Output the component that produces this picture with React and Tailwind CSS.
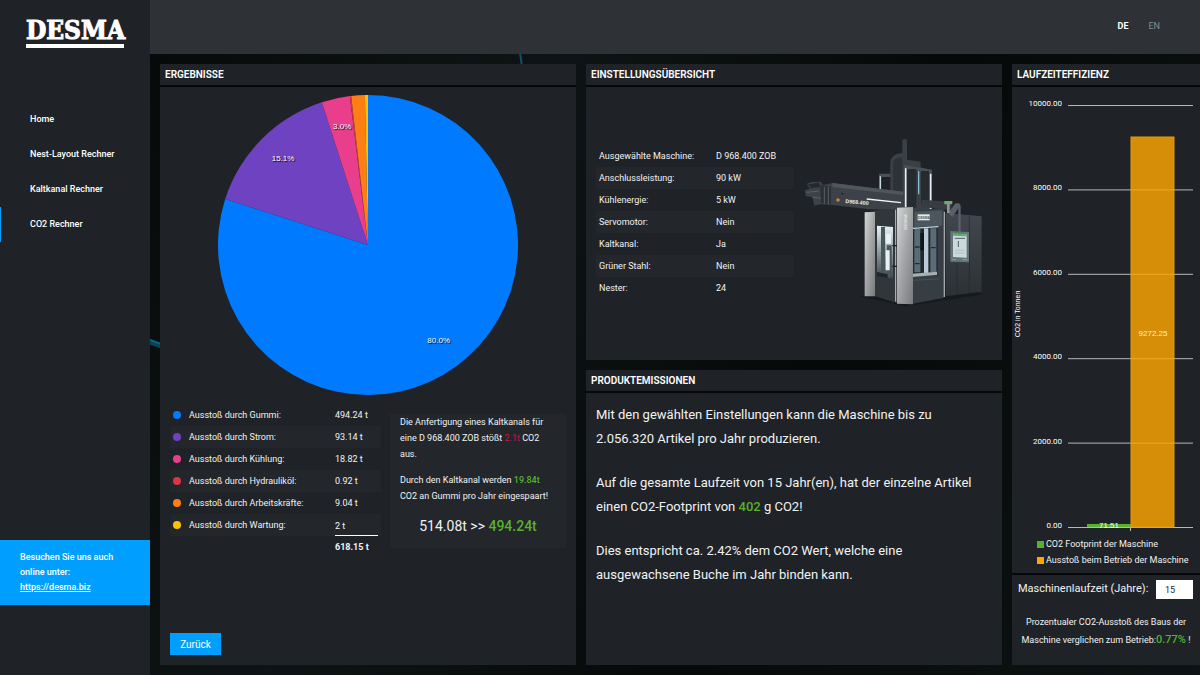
import React, { useState } from "react";

const emissions = [
    { label: "Gummi", value: 494.24, fill: "#007bff", dot: "bg-[#007bff]" },
    { label: "Strom", value: 93.14, fill: "#6f42c1", dot: "bg-[#6f42c1]" },
    { label: "Kühlung", value: 18.82, fill: "#e83e8c", dot: "bg-[#e83e8c]" },
    { label: "Hydrauliköl", value: 0.92, fill: "#dc3545", dot: "bg-[#dc3545]" },
    { label: "Arbeitskräfte", value: 9.04, fill: "#fd7e14", dot: "bg-[#fd7e14]" },
    { label: "Wartung", value: 2, fill: "#ffc107", dot: "bg-[#ffc107]" },
];

const settings = [
    ["Ausgewählte Maschine:", "D 968.400 ZOB"],
    ["Anschlussleistung:", "90 kW"],
    ["Kühlenergie:", "5 kW"],
    ["Servomotor:", "Nein"],
    ["Kaltkanal:", "Ja"],
    ["Grüner Stahl:", "Nein"],
    ["Nester:", "24"],
];

const navItems = ["Home", "Nest-Layout Rechner", "Kaltkanal Rechner", "CO2 Rechner"];

const Panel = ({ title, className = "", children }) => (
    <section className={`flex flex-col bg-[#1f2327] ${className}`}>
        <h2 className="h-[23px] shrink-0 border-b-2 border-[#050708] px-[5px] text-[10px] leading-[22px] font-semibold uppercase text-white">
            {title}
        </h2>
        {children}
    </section>
);

const Sidebar = () => (
    <aside className="flex w-[150px] shrink-0 flex-col bg-[#1f2327]">
        <a href="#home" className="mx-[26px] mt-[16px] border-b-4 border-white font-['DejaVu_Serif_Condensed','DejaVu_Serif',serif] text-[26px] leading-[28px] font-bold text-white [-webkit-text-stroke:1px_#fff]">
            DESMA
        </a>
        <nav className="mt-[54px] flex flex-col">
            {navItems.map((item) => (
                <a
                    key={item}
                    href="#"
                    className={`h-[35px] pl-[29px] text-[9px] leading-[35px] font-medium text-white border-l ${item === "CO2 Rechner" ? "border-[#009fff]" : "border-transparent"}`}
                >
                    {item}
                </a>
            ))}
        </nav>
        <div className="mt-auto mb-[70px] bg-[#009fff] px-5 pt-[10px] pb-[10px] text-[9px] leading-[15px] font-medium text-white">
            Besuchen Sie uns auch online unter:
            <a href="https://desma.biz" className="block underline">https://desma.biz</a>
        </div>
    </aside>
);

const PieChart = () => {
    const total = emissions.reduce((sum, e) => sum + e.value, 0);
    const point = (share, r) => {
        const a = share * 2 * Math.PI;
        return [150 + r * Math.sin(a), 150 - r * Math.cos(a)];
    };
    let start = 0;

    return (
        <svg viewBox="0 0 300 300" className="mx-auto mt-2 w-[300px]" role="img" aria-label="Ausstoß nach Quelle">
            {emissions.map((e) => {
                const share = e.value / total;
                const [x1, y1] = point(start, 150);
                const [x2, y2] = point(start + share, 150);
                const [tx, ty] = point(start + share / 2, 120);
                start += share;
                return (
                    <g key={e.label}>
                        <path d={`M150 150L${x1} ${y1}A150 150 0 ${share > 0.5 ? 1 : 0} 1 ${x2} ${y2}Z`} fill={e.fill} />
                        {share > 0.02 && (
                            <text x={tx} y={ty + 1} textAnchor="middle" className="fill-white font-['Liberation_Sans',sans-serif] text-[8px] [text-shadow:1px_1px_1px_#000]">
                                {(share * 100).toFixed(1)}%
                            </text>
                        )}
                    </g>
                );
            })}
        </svg>
    );
};

const Results = () => (
    <Panel title="Ergebnisse">
        <PieChart />
        <div className="mx-[10px] mt-[9px] flex items-start gap-[9px] text-[9px]">
            <table className="w-[211px] shrink-0">
                <tbody>
                    {emissions.map((e, i) => (
                        <tr key={e.label} className="h-[22px] even:bg-[#23272b]">
                            <td className="w-[19px] pl-[3px]">
                                <span className={`block size-2 rounded-full ${e.dot}`} />
                            </td>
                            <td className="pt-px">Ausstoß durch {e.label}:</td>
                            <td className="w-[46px] pr-[3px]">
                                <div className={i === emissions.length - 1 ? "border-b border-white leading-[17px] mt-1" : "leading-[17px]"}>
                                    {e.value} t
                                </div>
                            </td>
                        </tr>
                    ))}
                    <tr className="h-[22px] font-bold">
                        <td colSpan={2} />
                        <td className="pt-px">618.15 t</td>
                    </tr>
                </tbody>
            </table>
            <div className="mt-[10px] min-w-0 flex-1 bg-[#23272b] px-[10px] pb-[10px] leading-4">
                <p>
                    Die Anfertigung eines Kaltkanals für eine D 968.400 ZOB stößt <span className="text-[#c8174a]">2.1t</span> CO2 aus.
                </p>
                <p className="mt-[10px]">
                    Durch den Kaltkanal werden <span className="font-medium text-[#58b12c]">19.84t</span> CO2 an Gummi pro Jahr eingespaart!
                </p>
                <p className="mt-[10px] text-center text-[14px] leading-[24px]">
                    514.08t &gt;&gt; <span className="font-medium text-[#58b12c]">494.24t</span>
                </p>
            </div>
        </div>
        <button type="button" className="mt-auto mb-[10px] ml-[10px] h-[22px] w-[51px] bg-[#009fff] text-[10px] text-white">
            Zurück
        </button>
    </Panel>
);

const Machine = () => (
    <svg viewBox="30 20 534 510" className="w-[178px] shrink-0" role="img" aria-label="D 968.400 ZOB">
        <defs>
            <linearGradient id="steel" x1="0" y1="0" x2="1" y2="1">
                <stop offset="0" stopColor="#d4d5d6" />
                <stop offset="0.5" stopColor="#a2a4a6" />
                <stop offset="1" stopColor="#77797b" />
            </linearGradient>
            <linearGradient id="body" x1="0" y1="0" x2="0" y2="1">
                <stop offset="0" stopColor="#41474c" />
                <stop offset="1" stopColor="#2c3135" />
            </linearGradient>
            <linearGradient id="glow" x1="0" y1="0" x2="0" y2="1">
                <stop offset="0" stopColor="#e8f3f7" />
                <stop offset="0.5" stopColor="#8b9aa2" />
                <stop offset="1" stopColor="#3a444a" />
            </linearGradient>
        </defs>
        <path d="M195 498L330 528L565 492L530 480Z" fill="#171a1d" />
        {/* tower */}
        <path d="M286 200V92Q292 70 322 68V30Q330 22 336 30V88L377 94V110L411 122V240H286Z" fill="#3a4045" />
        <path d="M294 190V96Q300 80 322 82V190Z" fill="#2d3236" />
        <path d="M252 130H286V140H259V184H252ZM326 104L411 118V130L326 116Z" fill="#4a5156" />
        <path d="M336 116H364V232H336ZM378 122H402V222H378Z" fill="#262b2f" />
        <path d="M256 138V181" stroke="#c9dce4" strokeWidth="4" />
        <path d="M332 114V230M407 130V240" stroke="#e3effa" strokeWidth="5" />
        <path d="M371 123V192" stroke="#86bccb" strokeWidth="4" />
        {/* injection unit */}
        <path d="M30 180L44 176L36 160L48 155L78 154L84 164L112 158L325 184V240L222 237L112 224L76 222L58 226L52 200L32 198Z" fill="#3c4247" />
        <path d="M112 158L325 184V194L112 170Z" fill="#50575c" />
        <path d="M76 165L108 170V222L78 218Z" fill="#2b3034" />
        <path d="M40 162L72 157L76 170L48 174Z" fill="#252a2e" />
        <path d="M34 186L72 182M52 200L78 204M88 170V220M100 170V222" stroke="#596167" strokeWidth="3" />
        <circle cx="129" cy="209" r="5" fill="#db8347" />
        <circle cx="142" cy="190" r="3" fill="#202428" />
        <path d="M215 206L318 217" stroke="#f3f6f8" strokeWidth="4" />
        <text x="151" y="218" transform="rotate(5 151 218)" fill="#e9edf0" fontSize="16" fontWeight="700" className="font-['Liberation_Sans',sans-serif]">D968.400</text>
        <path d="M380 208L470 214V240L380 230Z" fill="#363c41" />
        {/* cabinet */}
        <path d="M240 240L306 236V518L240 498Z" fill="#30363a" />
        <path d="M246 286L294 290V446L246 438Z" fill="url(#glow)" />
        <path d="M258 290H270V440H258ZM276 345H290V440H276Z" fill="#4b555c" />
        <path d="M272 310H288V340H272ZM272 360H284V420H272Z" fill="#e8f0f3" />
        <path d="M246 425L278 432V443L246 438Z" fill="#20262a" />
        <path d="M302 238V514" stroke="#bdc3c8" strokeWidth="3" />
        <path d="M209 246L240 244V498L209 498Z" fill="url(#steel)" />
        <path d="M354 238L448 234V502L354 520Z" fill="#363d43" />
        <path d="M358 244L442 240V286L358 290Z" fill="#4b565e" />
        <rect x="368" y="252" width="36" height="18" fill="#dfeaf0" />
        <text x="369" y="265" fill="#4b565e" fontSize="10" fontWeight="700" className="font-['Liberation_Sans',sans-serif]">DESMA</text>
        <path d="M354 292L428 288V436L354 438Z" fill="#202930" />
        <path d="M358 296H376V426H358ZM406 294H424V426H406Z" fill="#5c6c77" />
        <path d="M387 294H400V428H387Z" fill="#b9cbd6" />
        <path d="M376 308H387V360H376Z" fill="#0f1519" />
        <path d="M354 294L430 289" stroke="#c6dae4" strokeWidth="4" />
        <path d="M350 430L426 424V434L350 440Z" fill="#a6b0b4" />
        <path d="M360 350H374M408 352H422M360 400H374" stroke="#252d33" strokeWidth="4" />
        <path d="M354 450L430 446" stroke="#535c63" strokeWidth="2" />
        <path d="M306 232L354 230V522L306 520Z" fill="url(#steel)" />
        <text x="336" y="298" transform="rotate(-90 336 298)" fill="#e1e2e3" fontSize="13" fontWeight="700" className="font-['Liberation_Sans',sans-serif]">DESMA</text>
        <path d="M292 346H306M292 408H306" stroke="#171b1e" strokeWidth="4" />
        {/* control cabinet */}
        <path d="M452 248L560 258V484L452 498Z" fill="url(#body)" />
        <path d="M448 244V500" stroke="#a2a8ad" strokeWidth="4" />
        <path d="M486 400V492M523 258V488" stroke="#25292d" strokeWidth="2" />
        <path d="M460 248L480 220Q494 214 497 226V304H490V234L472 260Z" fill="#59626a" />
        <path d="M448 212H472V222H464V248H456V222H448Z" fill="#8b9790" />
        <rect x="450" y="213" width="10" height="8" fill="#45c750" />
        <path d="M466 302L522 305V396L466 394Z" fill="#66757c" />
        <path d="M474 310L515 312V382L474 380Z" fill="#cad9da" />
        <path d="M474 310L515 312V318L474 316Z" fill="#53b55d" />
        <path d="M479 324H510M490 332V350" stroke="#536168" strokeWidth="3" />
        <path d="M480 360H508M480 368H508" stroke="#a3b3b6" strokeWidth="2" />
        <path d="M472 388H482M502 388H516" stroke="#55c962" strokeWidth="3" />
    </svg>
);

const SettingsOverview = () => (
    <Panel title="Einstellungsübersicht" className="flex-1">
        <div className="flex flex-1 items-center gap-[11px] pb-[2px] pl-[10px]">
            <table className="w-[198px] shrink-0 text-[9px]">
                <tbody>
                    {settings.map(([label, value]) => (
                        <tr key={label} className="h-[22px] even:bg-[#23272b]">
                            <td className="w-[120px] pl-[3px]">{label}</td>
                            <td>{value}</td>
                        </tr>
                    ))}
                </tbody>
            </table>
            <Machine />
        </div>
    </Panel>
);

const ProductEmissions = () => (
    <Panel title="Produktemissionen" className="flex-1">
        <div className="space-y-5 px-[10px] pt-[10px] text-[13px] leading-6">
            <p>Mit den gewählten Einstellungen kann die Maschine bis zu 2.056.320 Artikel pro Jahr produzieren.</p>
            <p>
                Auf die gesamte Laufzeit von 15 Jahr(en), hat der einzelne Artikel einen CO2-Footprint von{" "}
                <span className="font-medium text-[#58b12c]">402</span> g CO2!
            </p>
            <p>Dies entspricht ca. 2.42% dem CO2 Wert, welche eine ausgewachsene Buche im Jahr binden kann.</p>
        </div>
    </Panel>
);

const BarChart = () => (
    <svg viewBox="0 0 188 449" className="w-full" role="img" aria-label="CO2 in Tonnen">
        {[0, 1, 2, 3, 4, 5].map((i) => (
            <g key={i}>
                <path d={`M56 ${440.5 - i * 84.4}H181`} stroke="#b5b8ba" />
                <text x="50" y={441 - i * 84.4} textAnchor="end" className="fill-white text-[8px]">
                    {(i * 2000).toFixed(2)}
                </text>
            </g>
        ))}
        <path d="M118.5 440V444" stroke="#b5b8ba" />
        <rect x="75" y="437" width="44" height="3" fill="#58b12c" />
        <rect x="119" y="50" width="43" height="390" fill="#ffa500" fillOpacity="0.82" stroke="#e69a0c" />
        <text x="97" y="441" textAnchor="middle" className="fill-white font-['Liberation_Sans',sans-serif] text-[8px]">71.51</text>
        <text x="141" y="249" textAnchor="middle" className="fill-[#fff0cc] font-['Liberation_Sans',sans-serif] text-[8px]">9272.25</text>
        <text x="8" y="227" textAnchor="middle" transform="rotate(-90 8 227)" className="fill-white font-['Liberation_Sans',sans-serif] text-[7px]">CO2 in Tonnen</text>
    </svg>
);

const Efficiency = () => {
    const [years, setYears] = useState("15");

    return (
        <Panel title="Laufzeiteffizienz">
            <BarChart />
            <ul className="pl-[25px] text-[9px] leading-4 whitespace-nowrap">
                <li className="flex items-center gap-[2px]"><span className="size-[7px] bg-[#58b12c]" />CO2 Footprint der Maschine</li>
                <li className="flex items-center gap-[2px]"><span className="size-[7px] bg-[#ffa500]" />Ausstoß beim Betrieb der Maschine</li>
            </ul>
            <div className="mt-[5px] flex items-center justify-between border-t-2 border-[#050708] pt-[5px] pr-[7px] pl-[6px]">
                <label htmlFor="years" className="text-[11px]">Maschinenlaufzeit (Jahre):</label>
                <input
                    id="years"
                    inputMode="numeric"
                    value={years}
                    onChange={(e) => setYears(e.target.value)}
                    className="h-[19px] w-[37px] bg-white pl-[9px] text-[9px] text-[#1f2327]"
                />
            </div>
            <p className="mt-[14px] px-1 text-center text-[9px] leading-[18px]">
                Prozentualer CO2-Ausstoß des Baus der Maschine verglichen zum Betrieb:
                <span className="text-[11px] font-medium text-[#58b12c]">0.77%</span> !
            </p>
        </Panel>
    );
};

export default function App() {
    return (
        <div className="flex min-h-screen bg-[#090d0f] font-[Roboto,sans-serif] text-[#f1f2f3]">
            <Sidebar />
            <div className="flex min-w-0 flex-1 flex-col">
                <header className="flex h-[54px] shrink-0 items-center justify-end gap-5 bg-[#2e3236] pr-10 text-[9px]">
                    <button type="button" className="font-bold text-white">DE</button>
                    <button type="button" className="text-[#888c8f]">EN</button>
                </header>
                <main className="relative isolate grid flex-1 grid-cols-[416fr_416fr_188fr] gap-[10px] bg-[linear-gradient(115deg,#070a0b,#0e1415_30%,#06090a_60%,#0d1314)] py-[10px] pl-[10px]">
                    {/* light trails behind the panels */}
                    <svg className="absolute top-0 left-0 -z-10 h-full w-full" aria-hidden="true">
                        <path d="M370 0Q372 8 372 20" stroke="#0d5368" strokeWidth="2" fill="none" />
                        <path d="M0 288L14 293" stroke="#0a4254" strokeWidth="5" />
                        <path d="M0 286L14 291" stroke="#0c6580" strokeWidth="2" />
                    </svg>
                    <Results />
                    <div className="flex min-w-0 flex-col gap-[10px]">
                        <SettingsOverview />
                        <ProductEmissions />
                    </div>
                    <Efficiency />
                </main>
            </div>
        </div>
    );
}
